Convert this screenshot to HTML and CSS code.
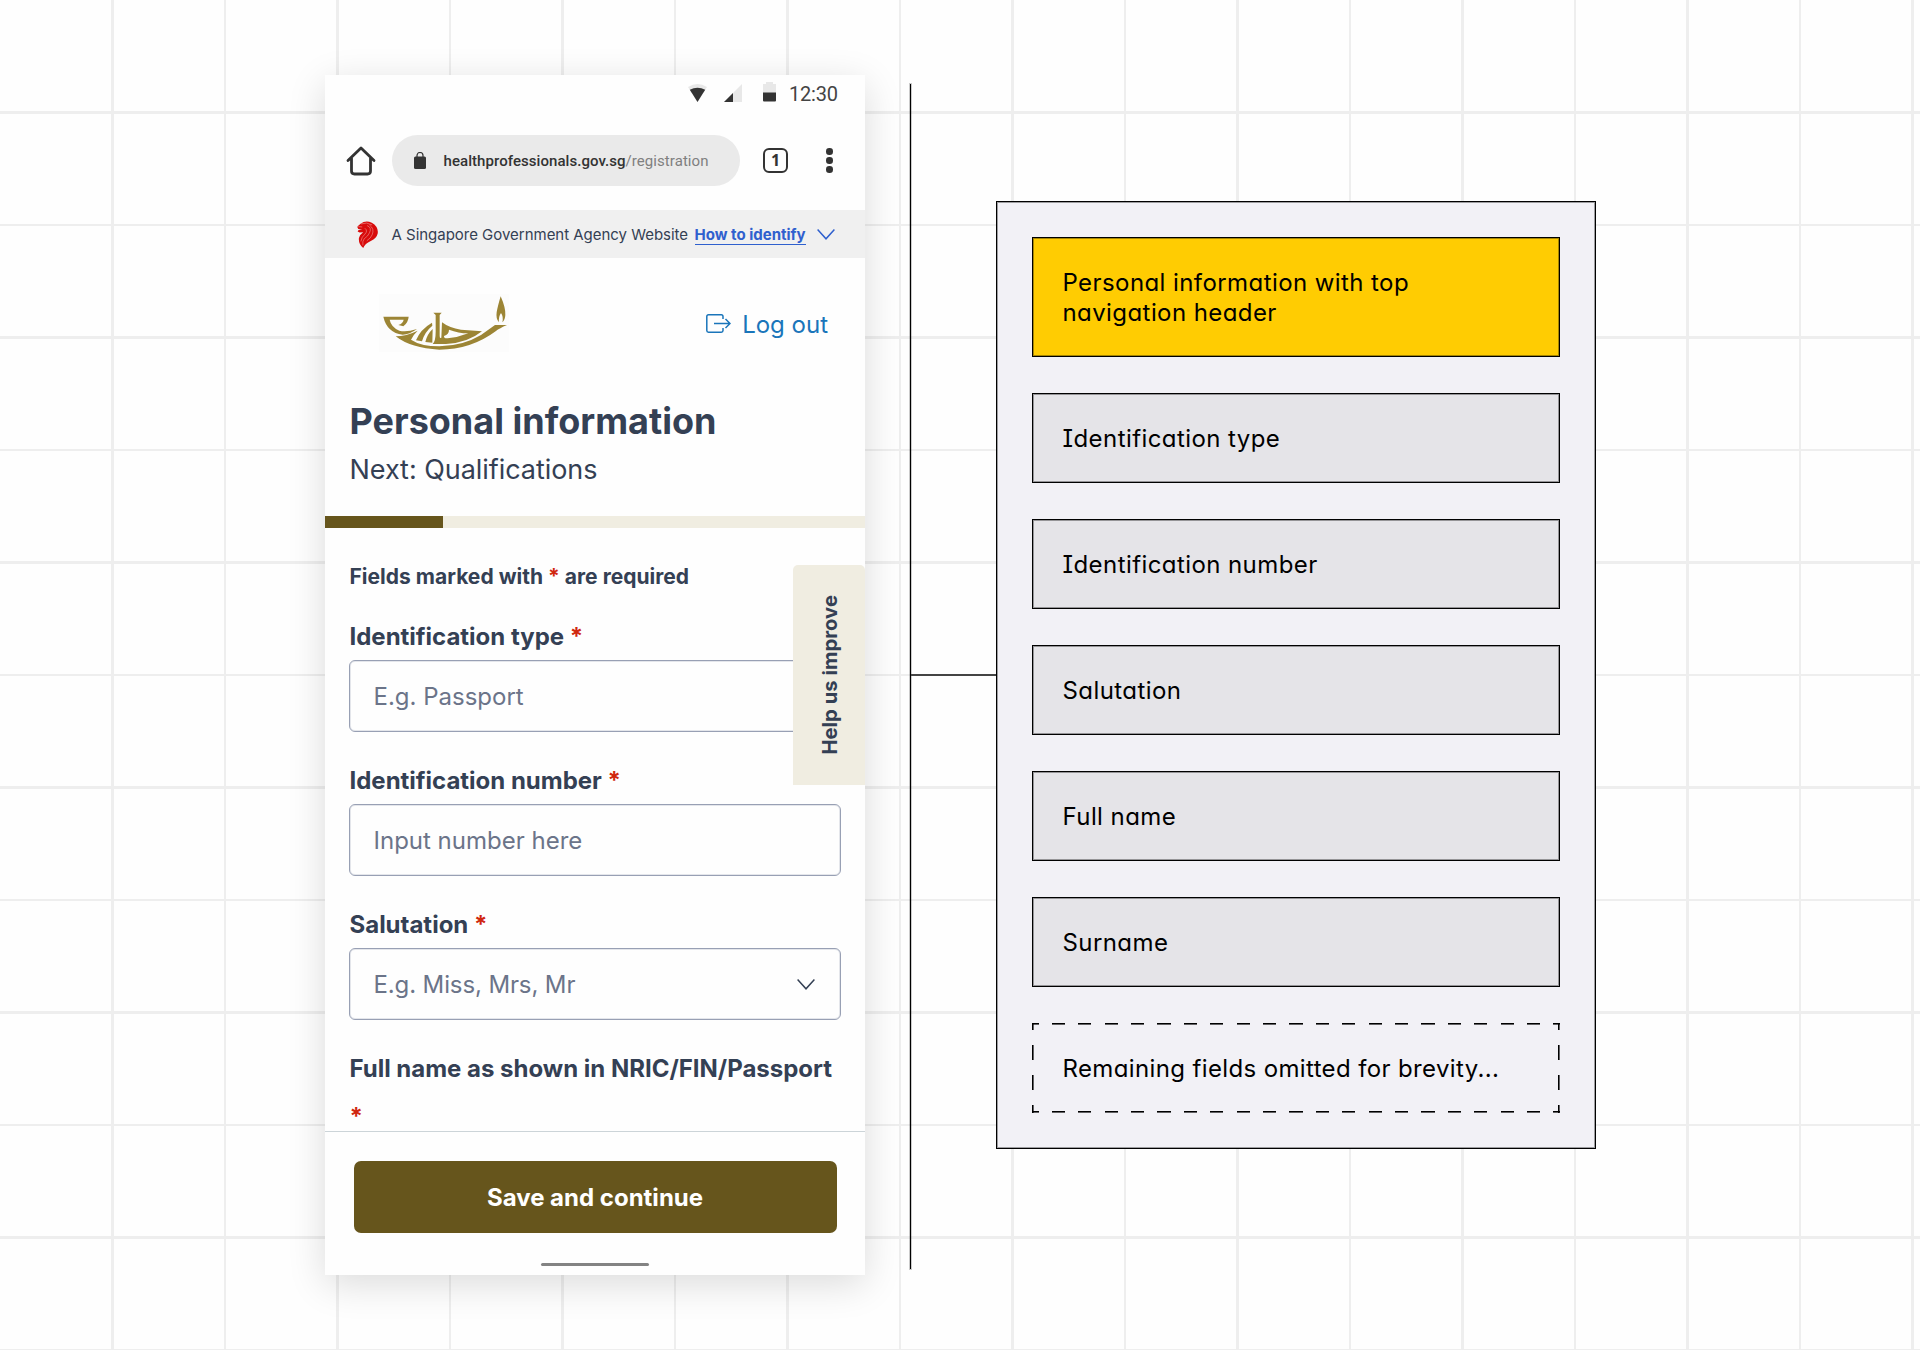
FILE: index.html
```html
<!DOCTYPE html>
<html lang="en">
<head>
<meta charset="utf-8">
<title>Personal information</title>
<link rel="stylesheet" href="styles.css">
</head>
<body>
<main class="board">
  <section class="phone">
    <div class="status">
      <svg class="wifi" viewBox="0 0 19 18"><path fill="#e8e8e8" d="M0 3Q9.500-3 19 3L9.500 18Z"/><path fill="#333" d="M1.800 5.800Q9.500 1.500 17.200 5.800L9.500 18Z"/></svg>
      <svg class="signal" viewBox="0 0 18 18"><path fill="#e8e8e8" d="M18 0V18H0Z"/><path fill="#333" d="M9 9V18H0Z"/></svg>
      <svg class="battery" viewBox="0 0 13 20"><path fill="#e8e8e8" d="M3 0h7v2h3v9H0V2h3Z"/><path fill="#333" d="M0 10.500h13V18.500a1 1 0 0 1-1 1H1a1 1 0 0 1-1-1Z"/></svg>
      <span class="time">12:30</span>
    </div>
    <div class="browser">
      <svg class="home" viewBox="0 0 30 30" fill="none" stroke="#333" stroke-width="2.800" stroke-linejoin="round" stroke-linecap="round"><path d="M2 14.500 15 2 28 14.500M5.500 12V25Q5.500 28 8.500 28H21.500Q24.500 28 24.500 25V12"/></svg>
      <div class="pill">
        <svg class="lock" viewBox="0 0 12 17"><path fill="none" stroke="#333" stroke-width="1.200" d="M3 6V3.500A2.500 2.500 0 0 1 9 3.500V6"/><rect y="4.500" width="12" height="12.500" rx="1.500" fill="#333"/></svg>
        <span class="url"><b>healthprofessionals.gov.sg</b>/registration</span>
      </div>
      <span class="tabs">1</span>
      <span class="dots"><i></i><i></i><i></i></span>
    </div>
    <div class="gov">
      <svg class="lion" viewBox="0 0 64 82"><path fill="#d80b0b" d="M3 15 11 8Q26-3 45 5 66 17 63 38 60 52 42 61 24 69 19 82 4 70 6 52 9 40 19 34L8 35 2 32 5 27 16 26 4 24 1 18Z"/><path fill="none" stroke="#f3b5b5" stroke-width="1.500" d="M12 9Q30 2 46 12M31 14Q46 20 38 36 34 46 22 54 16 62 18 74M38 12Q54 24 46 42 42 52 30 60M4 17 16 18M24 22Q34 30 24 40 14 48 12 62"/></svg>
      <span class="agency">A Singapore Government Agency Website</span>
      <a class="identify">How to identify</a>
      <svg class="chev" viewBox="0 0 18 11"><path d="M.6.600 9 9.800 17.400.6"/></svg>
    </div>
    <header class="top">
      <svg class="logo" viewBox="24 27 390 174"><g fill="#9c8535" fill-rule="evenodd">
        <path d="M37 95H113Q112 112 97 124L82 120Q96 115 98 104H56Q60 126 85 137 105 143 138 132 115 149 95 149 48 143 37 95Z"/>
        <path d="M74 154Q105 154 140 137 128 148 120 164 150 184 205 184 275 183 330 150L372 120H408Q385 130 375 138 300 194 205 194 120 190 74 154Z"/>
        <path d="M135 166Q148 133 183 113L184 122Q160 142 153 169ZM163 171Q168 148 185 132L184 173Z"/>
        <path d="M187 83H212L206 90V152Q206 162 211 158L213 112Q235 129 270 134L333 139Q290 174 225 177H185Q194 168 194 140V90ZM234 134Q234 148 219 153 218 161 230 160 262 157 292 145 262 145 234 134Z"/>
        <path d="M389 34Q404 68 403 90 402 106 394 112 398 95 390 84 382 95 384 112 374 102 377 82 380 64 389 34Z"/></g></svg>
      <a class="logout"><svg viewBox="0 0 25 19" fill="none" stroke="#1a75ba" stroke-width="1.500"><path d="M17 5V2.500Q17 .8 15.300.8H2.500Q.8.800.8 2.500V16.500Q.8 18.200 2.500 18.200H15.300Q17 18.200 17 16.500V14M8 9.500H24M19.500 5 24 9.500 19.500 14"/></svg><span>Log out</span></a>
    </header>
    <div class="heading">
      <h1>Personal information</h1>
      <p>Next: Qualifications</p>
    </div>
    <div class="progress"><i></i></div>
    <div class="form">
      <p class="note">Fields marked with <em>*</em> are required</p>
      <label>Identification type <em>*</em></label>
      <div class="input">E.g. Passport</div>
      <label>Identification number <em>*</em></label>
      <div class="input">Input number here</div>
      <label>Salutation <em>*</em></label>
      <div class="input select"><span>E.g. Miss, Mrs, Mr</span><svg class="chev dark" viewBox="0 0 18 11"><path d="M.6.600 9 9.800 17.400.6"/></svg></div>
      <label>Full name as shown in NRIC/FIN/Passport <em>*</em></label>
    </div>
    <footer>
      <button>Save and continue</button>
      <i class="bar"></i>
    </footer>
    <aside class="help"><span>Help us improve</span></aside>
  </section>
  <div class="rule"></div>
  <div class="link"></div>
  <section class="order">
    <div class="item active">Personal information with top navigation header</div>
    <div class="item">Identification type</div>
    <div class="item">Identification number</div>
    <div class="item">Salutation</div>
    <div class="item">Full name</div>
    <div class="item">Surname</div>
    <div class="item rest">Remaining fields omitted for brevity...</div>
  </section>
</main>
</body>
</html>
```
FILE: styles.css
```css
* { box-sizing: border-box; }
body {
  margin: 0;
  width: 1920px;
  height: 1350px;
  overflow: hidden;
  font-family: Inter, "Liberation Sans", sans-serif;
  color: #344054;
}
html {
  background:
    repeating-linear-gradient(90deg, transparent 0 109.200px, #eee 109.200px 111.700px, transparent 111.700px 112.500px) 2px 0 / 1920px 1350px no-repeat,
    repeating-linear-gradient(180deg, transparent 0 109.200px, #eee 109.200px 111.700px, transparent 111.700px 112.500px) 0 2px / 1920px 1350px no-repeat,
    #fefefe;
}
h1, p { margin: 0; font-weight: inherit; }
em { font-style: normal; color: #d0270f; }
svg { display: block; flex: none; }
.board { display: flex; align-items: flex-start; height: 1350px; padding: 75px 0 0 325px; }

.phone {
  position: relative;
  width: 540px;
  height: 1200px;
  background: #fefefe;
  box-shadow: 0 9px 36px rgba(0, 0, 0, .14);
}
.status { display: flex; height: 36px; padding-left: 363px; align-items: flex-start; }
.wifi { width: 19px; height: 18px; margin-top: 9px; }
.signal { width: 18px; height: 18px; margin: 9px 0 0 17px; }
.battery { width: 13px; height: 20px; margin: 7px 0 0 21px; }
.time { margin: 7px 0 0 13px; font: 20px/24px Roboto, sans-serif; letter-spacing: -.2px; color: #444; }
.browser { display: flex; align-items: center; height: 99px; padding: 0 0 0 21px; }
.home { width: 30px; height: 30px; }
.pill {
  display: flex;
  align-items: center;
  width: 348px;
  height: 51px;
  margin-left: 15.500px;
  padding-left: 22px;
  border-radius: 26px;
  background: #eaeaea;
}
.lock { width: 12px; height: 17px; }
.url { margin-left: 18px; font: 15px/20px Roboto, sans-serif; letter-spacing: .06px; color: #808080; white-space: nowrap; }
.url b { font-weight: 500; color: #333; }
.tabs {
  width: 25px;
  height: 25px;
  margin-left: 23.500px;
  border: 2px solid #333;
  border-radius: 6px;
  font: 700 16px/20px "Noto Sans", sans-serif;
  text-align: center;
  color: #333;
}
.dots { display: flex; flex-direction: column; gap: 2.700px; margin-left: 38px; }
.dots i { width: 6.500px; height: 6.500px; border-radius: 50%; background: #333; }

.gov { display: flex; align-items: center; height: 48px; padding-left: 30.500px; background: #f0f0f0; }
.lion { width: 23px; height: 27px; }
.agency { margin-left: 13px; font-size: 15px; letter-spacing: -.02px; padding-top: 1px; white-space: nowrap; }
.identify { margin: 2px 0 0 6.500px; font-size: 15px; font-weight: 700; line-height: 18px; color: #2f60ce; border-bottom: 1px solid #2f60ce; white-space: nowrap; }
.chev { width: 18px; height: 11px; margin-left: 11px; fill: none; stroke: #2f60ce; stroke-width: 1.500; }
.chev.dark { margin: 0; stroke: #344054; }

.top { display: flex; align-items: center; justify-content: space-between; height: 130px; padding: 0 37px 0 53.500px; }
.logo { width: 130px; height: 58px; background: #fcfcfc; }
.logout { display: flex; align-items: center; gap: 11.500px; font-size: 24px; color: #1a75ba; }
.logout svg { width: 25px; height: 19px; }
.logout span { padding-top: 2px; }
.heading { height: 128px; padding: 9px 24.500px 0; }
.heading h1 { font-size: 36px; line-height: 48px; font-weight: 700; }
.heading p { margin-top: 7px; font-size: 27px; line-height: 36px; letter-spacing: -.05px; }
.progress { height: 12px; background: #f0ede1; }
.progress i { display: block; width: 117.500px; height: 12px; background: #66551c; }

.form { height: 603px; padding: 34px 24px 0; overflow: hidden; }
.note { margin-bottom: 20px; padding-left: .500px; font-size: 21px; line-height: 30px; font-weight: 700; letter-spacing: .02px; }
label { display: block; margin-bottom: -1px; padding: 1px 0 0 .500px; font-size: 24px; line-height: 48px; font-weight: 700; letter-spacing: -.01px; }
.input {
  display: flex;
  align-items: center;
  justify-content: space-between;
  height: 72px;
  margin-bottom: 24px;
  padding: 0 25.500px 0 23.500px;
  border: 1px solid #98a0b4;
  border-radius: 6px;
  box-shadow: inset 0 0 0 1px rgba(152, 160, 180, .25);
  font-size: 24px;
  color: #6b7489;
}
.select { letter-spacing: -.12px; }
footer { display: flex; flex-direction: column; align-items: center; height: 144px; padding-top: 29px; border-top: 1px solid #ccd4d8; }
footer button {
  width: 483px;
  height: 72px;
  padding: 0;
  border: 0;
  border-radius: 7px;
  background: #66551c;
  color: #fff;
  font: 700 24px Inter, sans-serif;
}
.bar { width: 108px; height: 3px; margin-top: 30px; border-radius: 2px; background: #838383; }
.help {
  position: absolute;
  top: 490px;
  right: 0;
  display: flex;
  align-items: center;
  justify-content: center;
  width: 72px;
  height: 220px;
  border-radius: 5px 5px 0 0;
  background: #f0ede1;
  font-size: 20.300px;
  font-weight: 700;
  writing-mode: vertical-rl;
}
.help span { transform: rotate(180deg); }

.rule { width: 1px; height: 1185px; margin: 9px 0 0 45px; background: #000; box-shadow: 0 0 0 1px rgba(0, 0, 0, .2); }
.link { width: 85px; height: 2px; margin-top: 599px; background: #444; }
.order {
  display: flex;
  flex-direction: column;
  gap: 36px;
  width: 600px;
  margin-top: 126px;
  padding: 35px;
  border: 1px solid #000;
  background: #f2f1f6;
  box-shadow: inset 0 0 0 1px rgba(0, 0, 0, .35);
}
.item {
  padding: 30px 80px 28px 29.500px;
  border: 1px solid #000;
  background: #e5e4e8;
  box-shadow: inset 0 0 0 1px rgba(0, 0, 0, .35);
  color: #000;
  font-size: 24px;
  line-height: 30px;
  letter-spacing: .42px;
  font-feature-settings: "cv11", "cv08";
}
.item.active { background: #ffcc02; }
.item.rest {
  padding: 31px 30px 29px 30.500px;
  letter-spacing: .37px;
  border: 0;
  box-shadow: none;
  background:
    repeating-linear-gradient(90deg, #000 0 6.600px, transparent 6.600px 19.800px, #000 19.800px 26.400px) top / 100% 1.600px no-repeat,
    repeating-linear-gradient(90deg, #000 0 6.600px, transparent 6.600px 19.800px, #000 19.800px 26.400px) bottom / 100% 1.600px no-repeat,
    repeating-linear-gradient(#000 0 7.500px, transparent 7.500px 22.500px, #000 22.500px 30px) left / 1.600px 100% no-repeat,
    repeating-linear-gradient(#000 0 7.500px, transparent 7.500px 22.500px, #000 22.500px 30px) right / 1.600px 100% no-repeat;
}
```
